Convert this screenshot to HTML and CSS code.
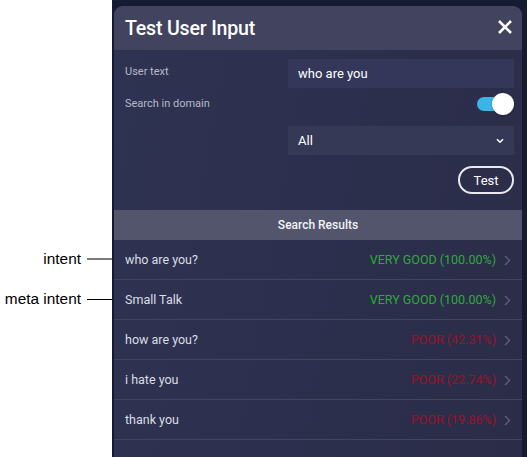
FILE: index.html
```html
<!DOCTYPE html>
<html>
<head>
<meta charset="utf-8">
<link rel="stylesheet" href="styles.css">
</head>
<body>
<div class="page">
  <div class="annots">
    <div class="annot"><span class="annot-text">intent</span><span class="annot-line grey"></span></div>
    <div class="annot"><span class="annot-text">meta intent</span><span class="annot-line"></span></div>
  </div>
  <div class="frame">
    <div class="panel">
      <div class="header">
        <span class="title">Test User Input</span>
        <svg class="close" width="16" height="16" viewBox="0 0 16 16"><path d="M2 2L14 14M14 2L2 14" stroke="#fff" stroke-width="2.6" stroke-linecap="butt"/></svg>
      </div>
      <div class="form">
        <div class="frow">
          <span class="label">User text</span>
          <div class="field input">who are you</div>
        </div>
        <div class="frow toggle-row">
          <span class="label">Search in domain</span>
          <div class="toggle-cell"><div class="toggle"><span class="knob"></span></div></div>
        </div>
        <div class="frow select-row">
          <span class="label"></span>
          <div class="field select"><span>All</span>
            <svg width="8" height="6" viewBox="0 0 8 6"><path d="M1 1.2L4 4.2L7 1.2" fill="none" stroke="#fff" stroke-width="1.6"/></svg>
          </div>
        </div>
        <div class="btn-row"><button class="btn">Test</button></div>
      </div>
      <div class="results-head">Search Results</div>
      <div class="results">
        <div class="row"><span class="name">who are you?</span><span class="score good">VERY GOOD (100.00%)</span><svg class="chev" width="7" height="11" viewBox="0 0 7 11"><path d="M1 1L5.5 5.5L1 10" fill="none" stroke="#5d6078" stroke-width="1.4"/></svg></div>
        <div class="row"><span class="name">Small Talk</span><span class="score good">VERY GOOD (100.00%)</span><svg class="chev" width="7" height="11" viewBox="0 0 7 11"><path d="M1 1L5.5 5.5L1 10" fill="none" stroke="#5d6078" stroke-width="1.4"/></svg></div>
        <div class="row"><span class="name">how are you?</span><span class="score poor">POOR (42.31%)</span><svg class="chev" width="7" height="11" viewBox="0 0 7 11"><path d="M1 1L5.5 5.5L1 10" fill="none" stroke="#5d6078" stroke-width="1.4"/></svg></div>
        <div class="row"><span class="name">i hate you</span><span class="score poor">POOR (22.74%)</span><svg class="chev" width="7" height="11" viewBox="0 0 7 11"><path d="M1 1L5.5 5.5L1 10" fill="none" stroke="#5d6078" stroke-width="1.4"/></svg></div>
        <div class="row"><span class="name">thank you</span><span class="score poor">POOR (19.86%)</span><svg class="chev" width="7" height="11" viewBox="0 0 7 11"><path d="M1 1L5.5 5.5L1 10" fill="none" stroke="#5d6078" stroke-width="1.4"/></svg></div>
      </div>
    </div>
  </div>
</div>
</body>
</html>
```
FILE: styles.css
```css
html, body {
  margin: 0;
  padding: 0;
  background: #ffffff;
  height: 457px;
  overflow: hidden;
}
.page {
  display: flex;
  height: 457px;
}
.annots {
  width: 112px;
  display: flex;
  flex-direction: column;
  padding-top: 239px;
}
.annot {
  height: 40px;
  display: flex;
  align-items: center;
  justify-content: flex-end;
  font-family: "Liberation Sans", Arial, sans-serif;
  font-size: 15.4px;
  color: #000;
}
.annot-text {
  margin-right: 6px;
}
.annot-line {
  width: 25px;
  height: 1px;
  background: #000;
}
.annot-line.grey {
  background: #7a7a7a;
  height: 2px;
}
.frame {
  width: 415px;
  background: #161a32;
  padding: 6px 5px 0 2px;
  box-sizing: border-box;
  height: 457px;
}
.panel {
  height: 100%;
  border-radius: 9px 9px 0 0;
  overflow: hidden;
  background: linear-gradient(100deg, #2f3352 0%, #2c2f4d 50%, #2b2d48 100%);
  font-family: Roboto, "Noto Sans", sans-serif;
  color: #fff;
}
.header {
  height: 44px;
  background: #42445f;
  display: flex;
  align-items: center;
  justify-content: space-between;
  padding: 0 9px 0 11px;
}
.title {
  font-size: 19.6px;
  font-weight: 500;
  letter-spacing: -0.2px;
  margin-top: 1px;
}
.close {
  margin-top: -3px;
}
.form {
  padding: 9px 8px 0 11px;
  height: 160px;
  box-sizing: border-box;
}
.frow {
  display: flex;
  justify-content: space-between;
}
.label {
  font-size: 11px;
  color: #b7b9c8;
  padding-top: 6px;
}
.field {
  width: 226px;
  height: 29px;
  box-sizing: border-box;
  background: #363957;
  display: flex;
  align-items: center;
  padding: 0 10px;
  font-size: 13px;
  color: #fff;
}
.input {
  background: #34375a;
}
.toggle-row {
  margin-top: 5px;
}
.toggle-row .label {
  padding-top: 4px;
}
.toggle-cell {
  width: 226px;
  display: flex;
  justify-content: flex-end;
}
.toggle {
  width: 37px;
  height: 23px;
  position: relative;
}
.toggle::before {
  content: "";
  position: absolute;
  left: 0;
  top: 4px;
  width: 34px;
  height: 14px;
  border-radius: 7px;
  background: #3bb4e8;
}
.knob {
  position: absolute;
  right: 0;
  top: 0;
  width: 22px;
  height: 22px;
  border-radius: 50%;
  background: #fff;
  box-shadow: 0 1px 2px rgba(0,0,0,0.3);
}
.select-row {
  margin-top: 10px;
}
.select {
  justify-content: space-between;
  padding: 0 10px 0 10px;
  background: #363956;
}
.select svg {
  margin-top: 1px;
}
.btn-row {
  display: flex;
  justify-content: flex-end;
  margin-top: 11px;
}
.btn {
  width: 56px;
  height: 28px;
  border: 2px solid #e9e9ef;
  border-radius: 14px;
  background: transparent;
  color: #fff;
  font-family: Roboto, "Noto Sans", sans-serif;
  font-size: 13px;
  padding: 0;
}
.results-head {
  height: 30px;
  background: #53556d;
  display: flex;
  align-items: center;
  justify-content: center;
  font-size: 12px;
  font-weight: 500;
  color: #f2f3f7;
}
.row {
  height: 40px;
  box-sizing: border-box;
  border-bottom: 1px solid #42455f;
  display: flex;
  align-items: center;
  padding: 0 11px 0 11px;
  font-size: 12.5px;
}
.name {
  flex: 1;
  color: #dcdde5;
}
.score {
  margin-right: 8px;
}
.good {
  color: #2fa93d;
}
.poor {
  color: #a00f2a;
}
.chev {
  margin-top: 1px;
}
```
